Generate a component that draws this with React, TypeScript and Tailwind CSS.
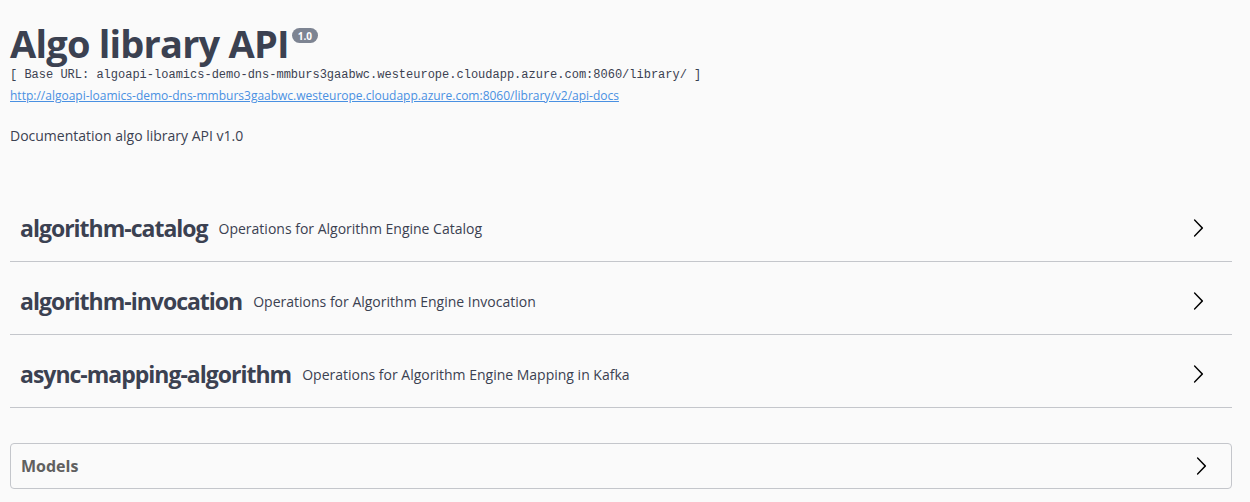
import React from 'react';

const tags = [
  { name: 'algorithm-catalog', desc: 'Operations for Algorithm Engine Catalog' },
  { name: 'algorithm-invocation', desc: 'Operations for Algorithm Engine Invocation' },
  { name: 'async-mapping-algorithm', desc: 'Operations for Algorithm Engine Mapping in Kafka' },
];

function Arrow() {
  return (
    <svg width="20" height="20" viewBox="0 0 20 20" className="shrink-0">
      <path
        fill="#000"
        d="M13.25 10L6.109 2.58a.697.697 0 0 1 0-.979.68.68 0 0 1 .969 0l7.83 7.908a.697.697 0 0 1 0 .979l-7.83 7.908a.68.68 0 0 1-.969 0 .697.697 0 0 1 0-.979L13.25 10z"
      />
    </svg>
  );
}

export default function App() {
  return (
    <div className="min-h-screen bg-[#fafafa] text-[#3b4151] font-['Open_Sans',sans-serif]">
      <div className="px-[10px] pr-[18px] pt-[20px]">
        {/* Info */}
        <div>
          <div className="flex items-start">
            <h2 className="text-[38px] leading-[46px] font-bold tracking-[-0.8px] text-[#3b4151]">
              Algo library API
            </h2>
            <span className="ml-[3px] mt-[8px] rounded-full bg-[#7d8492] px-[6px] h-[15px] flex items-center text-[10px] font-bold text-white leading-none">
              1.0
            </span>
          </div>
          <pre className="mt-[1px] font-['Liberation_Mono',monospace] text-[12px] leading-[16px] text-[#3b4151]">
            [ Base URL: algoapi-loamics-demo-dns-mmburs3gaabwc.westeurope.cloudapp.azure.com:8060/library/ ]
          </pre>
          <a
            href="#"
            className="mt-[4px] block text-[12px] leading-[18px] text-[#4990e2] underline"
          >
            http://algoapi-loamics-demo-dns-mmburs3gaabwc.westeurope.cloudapp.azure.com:8060/library/v2/api-docs
          </a>
          <p className="mt-[21px] text-[14px] leading-[20px]">Documentation algo library API v1.0</p>
        </div>

        {/* Tags */}
        <div className="mt-[43px]">
          {tags.map((t) => (
            <div
              key={t.name}
              className="flex h-[73px] items-center border-b border-[#c4c6cb] pl-[10px] pr-[24px] pt-[6px]"
            >
              <span className="text-[23px] font-bold tracking-[-1px] text-[#3b4151]">{t.name}</span>
              <span className="ml-[11px] flex-1 text-[14px] text-[#3b4151]">{t.desc}</span>
              <Arrow />
            </div>
          ))}
        </div>

        {/* Models */}
        <div className="mt-[35px] flex h-[46px] items-center rounded-[4px] border border-[#c4c6cb] pl-[10px] pr-[20px]">
          <span className="flex-1 text-[16px] font-bold text-[#606060]">Models</span>
          <Arrow />
        </div>
      </div>
    </div>
  );
}
